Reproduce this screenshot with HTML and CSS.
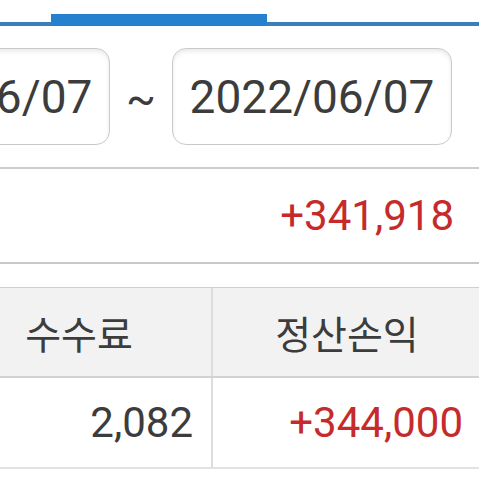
FILE: index.html
```html
<!DOCTYPE html>
<html lang="ko">
<head>
<meta charset="utf-8">
<link rel="stylesheet" href="styles.css">
</head>
<body>
<div class="page">
  <div class="tabs"><div class="tab-active"></div></div>
  <div class="dates">
    <div class="date-box">2022/06/07</div>
    <div class="tilde">~</div>
    <div class="date-box">2022/06/07</div>
  </div>
  <div class="summary"><span class="red">+341,918</span></div>
  <div class="table">
    <div class="row head">
      <div class="cell">수수료</div>
      <div class="cell">정산손익</div>
    </div>
    <div class="row body">
      <div class="cell num">2,082</div>
      <div class="cell num red">+344,000</div>
    </div>
  </div>
</div>
</body>
</html>
```
FILE: styles.css
```css
html, body {
  margin: 0;
  padding: 0;
  background: #fff;
}
.page {
  width: 479px;
  height: 479px;
  overflow: hidden;
  font-family: Roboto, "Noto Sans CJK KR", sans-serif;
  color: #3c3c3c;
}
.tabs {
  height: 26px;
  display: flex;
  align-items: flex-end;
  padding-left: 51px;
  box-shadow: inset 0 -4px 0 #3a7fb9;
}
.tab-active {
  width: 216px;
  height: 12px;
  background: #2680d0;
}
.dates {
  display: flex;
  justify-content: flex-end;
  align-items: center;
  padding: 22px 27px 22px 0;
}
.date-box {
  flex: 0 0 280px;
  height: 97px;
  box-sizing: border-box;
  border: 1px solid #c9c9c9;
  border-radius: 14px;
  box-shadow: inset 0 3px 4px rgba(0,0,0,0.08);
  display: flex;
  align-items: center;
  justify-content: center;
  font-size: 46px;
  line-height: 1;
}
.tilde {
  flex: 0 0 62px;
  text-align: center;
  font-size: 44px;
  line-height: 1;
  padding-top: 4px;
}
.summary {
  border-top: 2px solid #cccccc;
  border-bottom: 2px solid #c8c8c8;
  height: 93px;
  display: flex;
  align-items: center;
  justify-content: flex-end;
  padding-right: 25px;
  font-size: 42px;
}
.red {
  color: #c62a2a;
}
.table {
  margin-top: 23px;
  border-top: 1px solid #cfcfcf;
  display: flex;
  flex-direction: column;
  align-items: flex-end;
}
.row {
  display: grid;
  grid-template-columns: 266px 268px;
  width: 534px;
  margin-right: -2px;
}
.head {
  background: #f2f2f2;
  height: 88px;
  border-bottom: 2px solid #d2d2d2;
}
.body {
  height: 89px;
  border-bottom: 2px solid #e2e2e2;
}
.cell {
  display: flex;
  align-items: center;
  justify-content: center;
  font-size: 39px;
}
.cell:first-child {
  border-right: 2px solid #dddddd;
}
.cell.num {
  justify-content: flex-end;
  padding-right: 18px;
  font-size: 42px;
}
.cell.num.red {
  padding-right: 18px;
}
```
